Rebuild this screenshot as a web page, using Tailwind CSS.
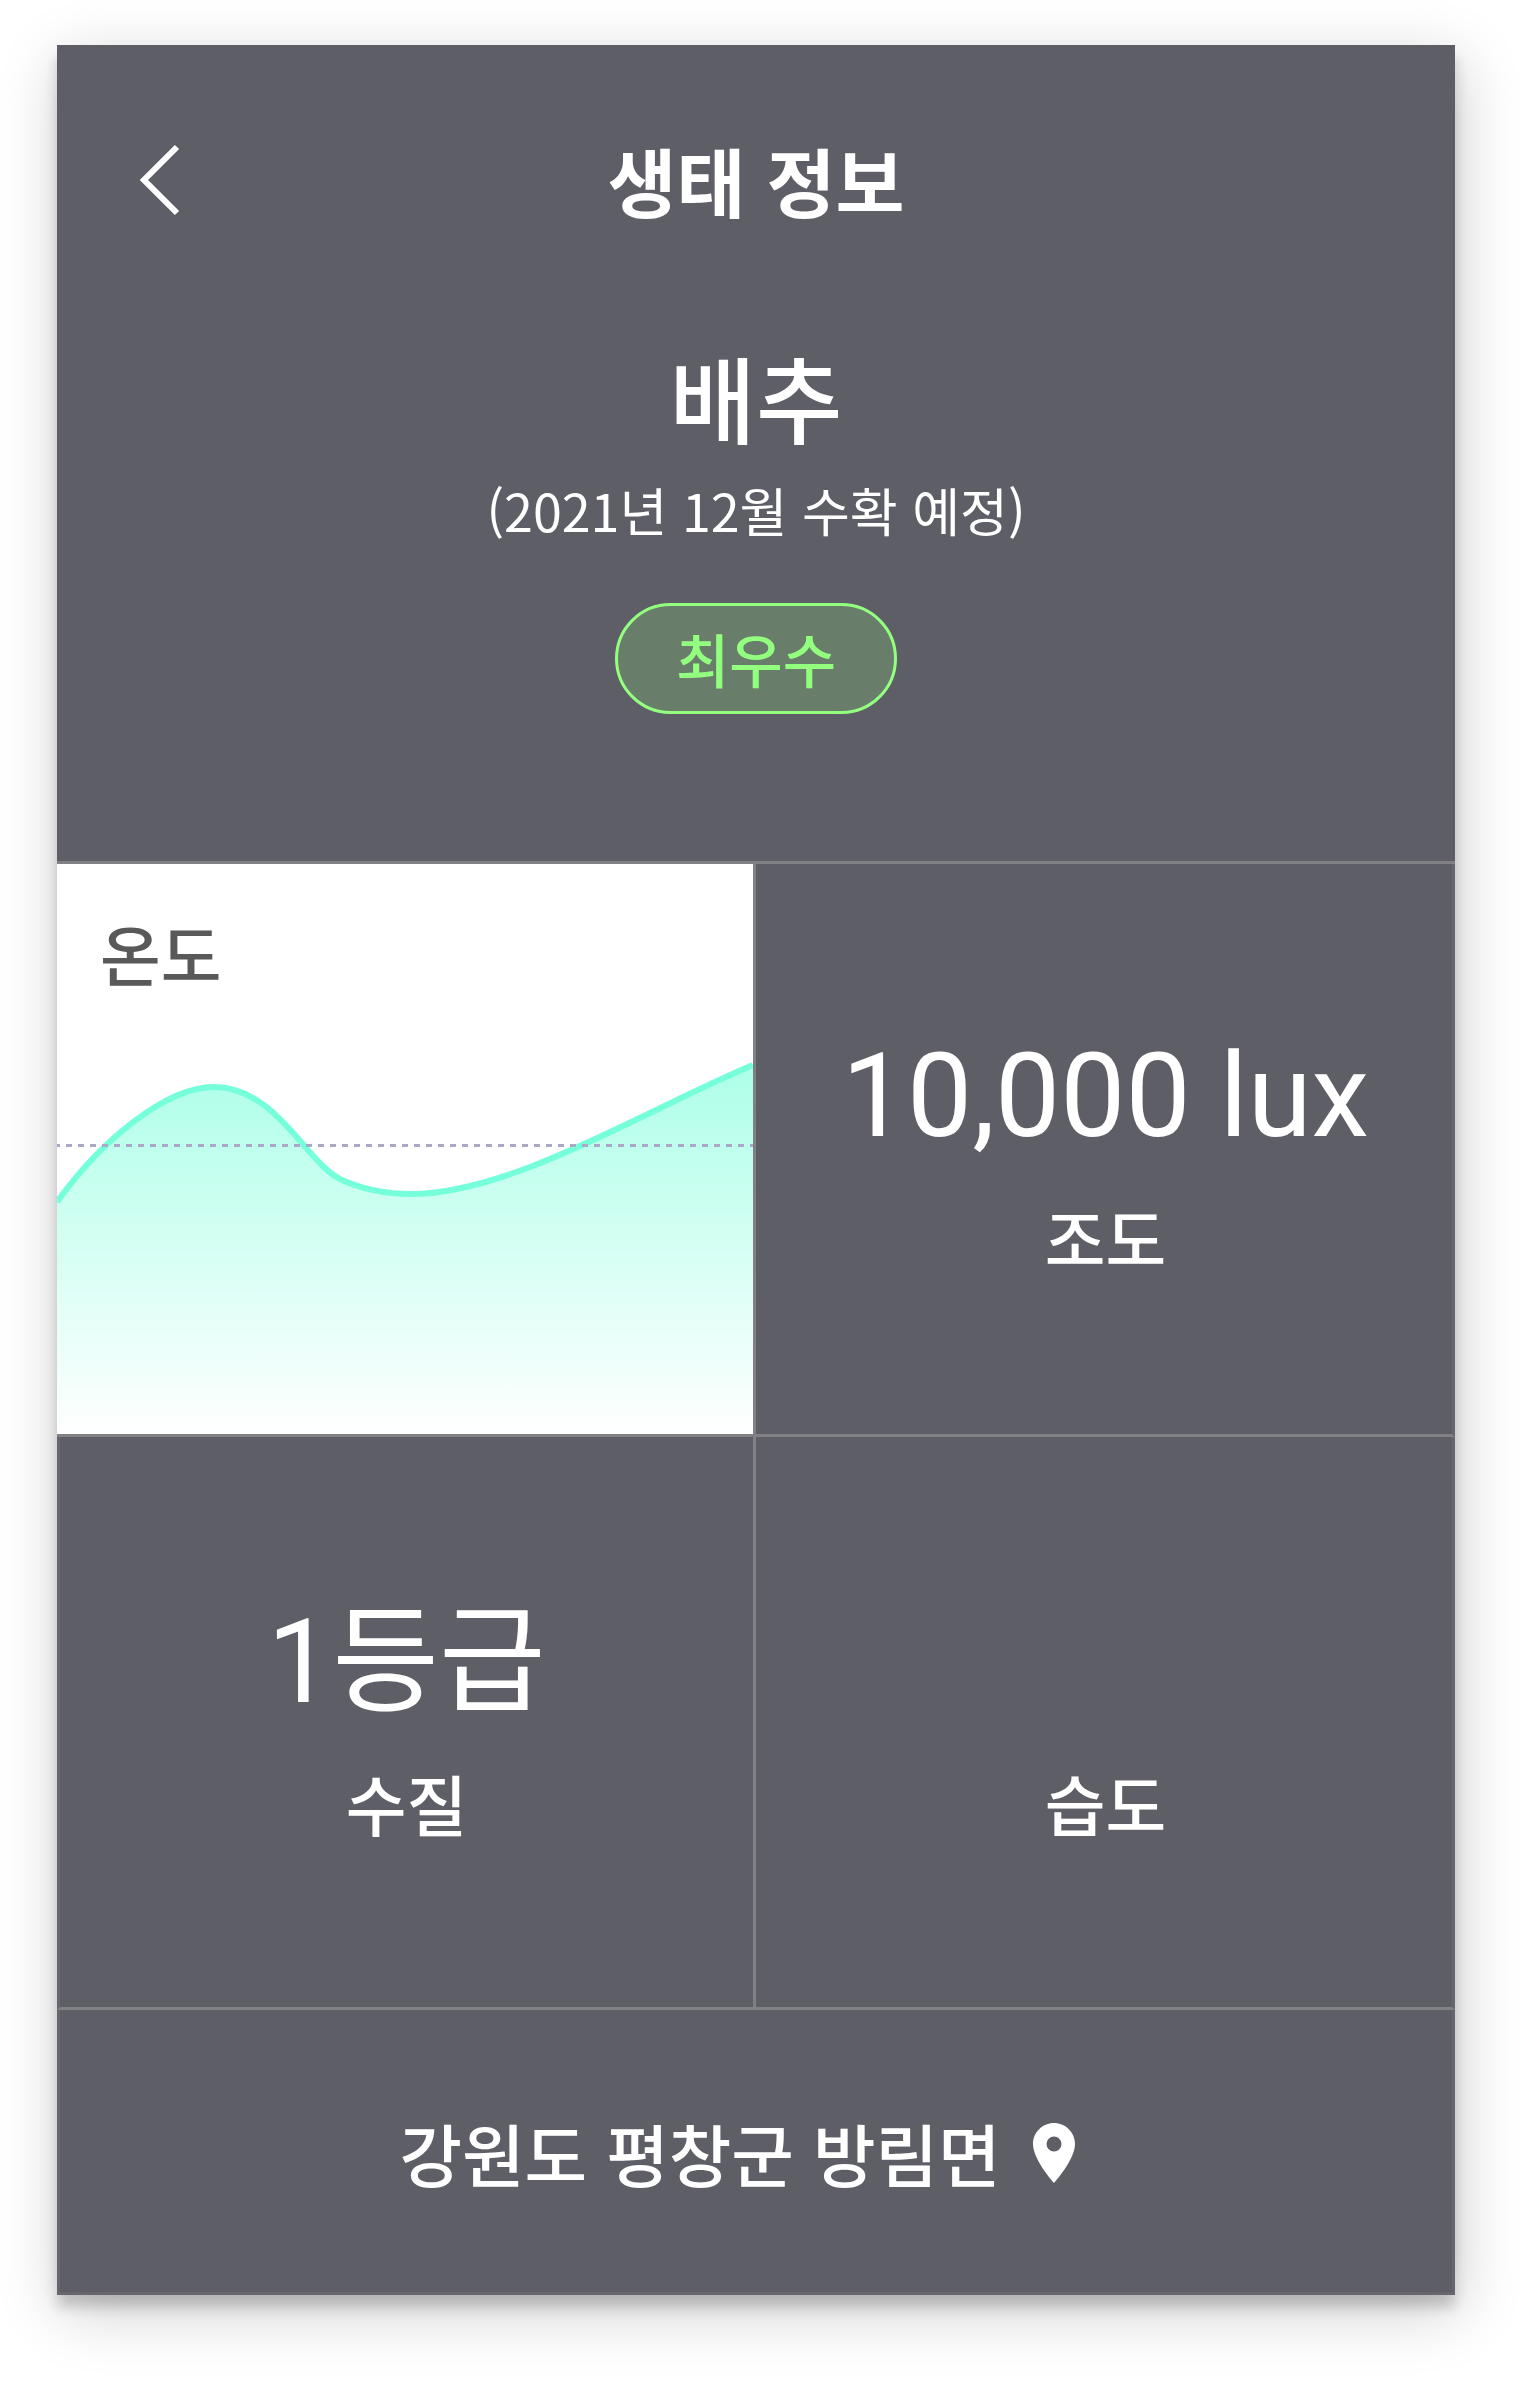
<!DOCTYPE html>
<html lang="ko">
<head>
<meta charset="utf-8">
<meta name="viewport" content="width=device-width, initial-scale=1">
<title>생태 정보</title>
<script src="https://cdn.jsdelivr.net/npm/@tailwindcss/browser@4"></script>
</head>
<body class="bg-white pt-[45px] pr-[81px] pb-[93px] pl-[57px] font-['Noto_Sans_CJK_KR',sans-serif] font-medium text-white">
<main class="bg-[#5e5e67] shadow-[0_12px_12px_rgba(0,0,0,0.18),4px_16px_60px_rgba(0,0,0,0.2)]">
  <header class="flex flex-col items-center pt-[81px] pb-[147px]">
    <div class="grid w-full grid-cols-[1fr_auto_1fr] items-center">
      <button type="button" aria-label="뒤로" class="ml-20 w-fit">
        <svg class="block h-[72px] w-[45px]" viewBox="0 0 45 72" fill="none" stroke="#fff" stroke-width="6"><path d="M40 3 7 36l33 33"/></svg>
      </button>
      <h1 class="text-[75px] leading-[108px] font-bold">생태 정보</h1>
    </div>
    <h2 class="mt-[98px] text-[94px] leading-[128px]">배추</h2>
    <p class="mt-2 text-[52px] leading-[84px] font-normal">(2021년 12월 수확 예정)</p>
    <p class="mt-[51px] rounded-full border-[3px] border-[#93ff7f] bg-[#93ff7f]/20 px-[58px] text-[58px] leading-[105px] text-[#93ff7f]">최우수</p>
  </header>

  <section class="grid grid-cols-2 border-t-[3px] border-[#808085]">
    <article class="relative h-[573px] border-r-[3px] border-b-[3px] border-[#808085] bg-white text-[#595959]">
      <h3 class="px-[43px] pt-[46px] text-[66px] leading-[84px]">온도</h3>
      <svg class="absolute inset-0 h-full w-full" viewBox="0 0 696 570" preserveAspectRatio="none" fill="none" aria-hidden="true">
        <defs><linearGradient id="fade" x1="0" y1="201" x2="0" y2="570" gradientUnits="userSpaceOnUse"><stop stop-color="#adffe8"/><stop offset="1" stop-color="#fff"/></linearGradient></defs>
        <path fill="url(#fade)" d="M0 338C45 275 110 223 157 223 220 223 250 301 285 316 305 325 329 330 354 330 455 330 590 245 696 201V570H0Z"/>
        <path stroke="#75ffdb" stroke-width="6" d="M0 338C45 275 110 223 157 223 220 223 250 301 285 316 305 325 329 330 354 330 455 330 590 245 696 201"/>
        <path stroke="#a9a9c6" stroke-width="3" stroke-dasharray="6 6" stroke-dashoffset="3" d="M0 281.500H696"/>
      </svg>
    </article>
    <article class="flex h-[573px] flex-col items-center border-r-[3px] border-b-[3px] border-r-[#67666e] border-b-[#808085] pt-[160px] pl-[3px]">
      <p class="font-[Roboto,'Noto_Sans_CJK_KR',sans-serif] text-[116px] leading-[144px] font-normal">10,000 lux</p>
      <h3 class="mt-5 text-[66px] leading-[96px]">조도</h3>
    </article>
    <article class="flex h-[573px] flex-col items-center border-x-[3px] border-b-[3px] border-r-[#808085] border-b-[#808085] border-l-[#67666e] pt-[153px]">
      <p class="font-[Roboto,'Noto_Sans_CJK_KR',sans-serif] text-[116px] leading-[144px] font-normal">1등급</p>
      <h3 class="mt-5 text-[66px] leading-[96px]">수질</h3>
    </article>
    <article class="flex h-[573px] flex-col items-center border-r-[3px] border-b-[3px] border-r-[#67666e] border-b-[#808085] pt-[153px] pl-[3px]">
      <p class="h-[144px]"></p>
      <h3 class="mt-5 text-[66px] leading-[96px]">습도</h3>
    </article>
  </section>

  <footer class="flex h-[285px] items-center justify-center gap-8 border-x-[3px] border-b-[3px] border-[#67666e] pt-1 pr-[38px]">
    <address class="text-[68px] leading-[96px] not-italic">강원도 평창군 방림면</address>
    <svg class="h-[60px] w-[42px]" viewBox="5 2 14 20" fill="#fff" aria-hidden="true"><path d="M12 2C8.130 2 5 5.130 5 9c0 5.250 7 13 7 13s7-7.750 7-13c0-3.870-3.130-7-7-7zm0 9.500a2.500 2.500 0 0 1 0-5 2.500 2.500 0 0 1 0 5z"/></svg>
  </footer>
</main>
</body>
</html>
